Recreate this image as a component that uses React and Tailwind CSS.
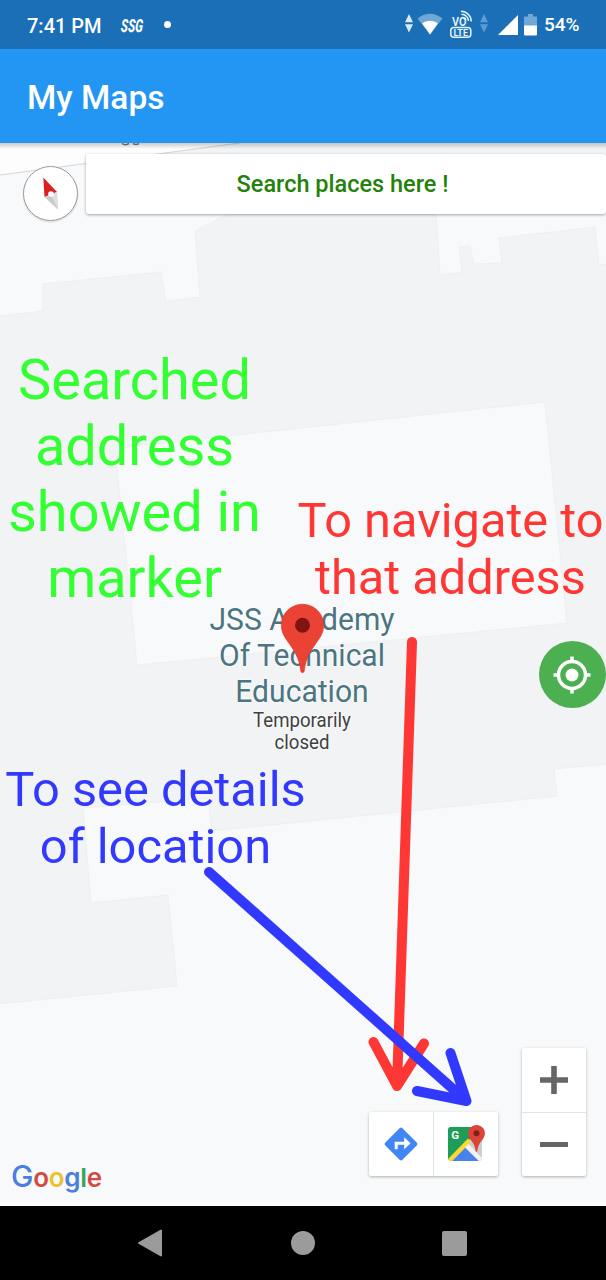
import React from "react";

function DataArrows({ className }) {
  return (
    <svg className={className} width="8" height="20" viewBox="0 0 8 20" fill="currentColor">
      <path d="M4 0 8 8.300H0zM4 18.500 0 10.200h8z" />
    </svg>
  );
}

function StatusBar() {
  return (
    <header className="flex h-[49px] shrink-0 items-center bg-[#1a6fb7] pl-[27px] pr-[27px] text-[20px] font-medium text-white">
      <span className="w-[94px] whitespace-nowrap pt-[2px]">7:41 PM</span>
      <span className="w-[43px] whitespace-nowrap font-['Roboto']">
        <span className="inline-block origin-left -skew-x-6 scale-x-[0.66] text-[18px] font-extrabold italic">SSG</span>
      </span>
      <span className="size-[7px] rounded-full bg-white" />
      <div className="ml-auto flex items-center">
        <DataArrows className="mr-[4px] -mt-[2px] text-[#dcebf7]" />
        <svg className="-mt-[2px]" width="26" height="22" viewBox="0 0 26 22">
          <path d="M0.500 5.500C8-1 18-1 25.500 5.500L13 21.500z" fill="#6fa7d7" />
          <path d="M5.200 10.500C9.500 6.800 16.500 6.800 20.800 10.500L13 21.500z" fill="#fff" />
        </svg>
        <svg className="ml-[7px] -mt-[2px]" width="24" height="30" viewBox="0 0 24 30">
          <text x="2" y="17" fontSize="13" fontWeight="600" fontFamily="Roboto" fill="#e7f2fa" textLength="14.500" lengthAdjust="spacingAndGlyphs">VO</text>
          <g fill="none" stroke="#e7f2fa" strokeWidth="1.500">
            <path d="M11 2.200A10.500 10.500 0 0 1 21.300 12.500M11.500 5.200A7.300 7.300 0 0 1 18.600 12M13 8.400A4 4 0 0 1 16 11" />
            <rect x="0.800" y="18.600" width="20" height="9.700" rx="3" />
          </g>
          <text x="3.500" y="26.700" fontSize="9" fontWeight="700" fontFamily="Roboto" fill="#e7f2fa" textLength="14.500" lengthAdjust="spacingAndGlyphs">LTE</text>
        </svg>
        <DataArrows className="ml-[6px] -mt-[2px] text-[#5d9bd0]" />
        <svg className="ml-[10px] mt-[1px]" width="20" height="20" viewBox="0 0 20 20">
          <path d="M20 0v20H0z" fill="#fff" />
        </svg>
        <svg className="ml-[6px]" width="13" height="22" viewBox="0 0 13 22">
          <path d="M4 0h5v2.500h4V12H0V2.500h4z" fill="#6fa7d7" />
          <path d="M0 11.500h13V20.500a1 1 0 0 1-1 1H1a1 1 0 0 1-1-1z" fill="#fff" />
        </svg>
        <span className="ml-[7px] w-[35px] whitespace-nowrap pt-[2px] text-[19px]">54%</span>
      </div>
    </header>
  );
}

function MapTerrain() {
  return (
    <svg className="absolute inset-0" width="606" height="1063" viewBox="0 143 606 1063">
      <rect y="143" width="606" height="1063" fill="#f1f3f4" />
      <g fill="#f8f9fb" stroke="#ebedef" strokeWidth="0.700">
        <path d="M-2 175 150 154H240L227 215 195 231 200 297 166 301 161 272 43 284V311L-2 316z" />
        <path d="M435 200 440 275 462 272 459 247 470 246 474 264 502 263 499 238 595 227 599 265 608 264V200z" />
        <path d="M115 448 545 402 567 623 137 665z" />
        <path d="M-2 1004 177 986 168 895 91 903 83 808 208 798 212 831 557 796 554 769 608 764V1204H-2z" />
      </g>
      <path d="M0 143H240L0 175z" fill="#fdfdfe" />
      <path d="M0 175 240 143" stroke="#d5d7d9" strokeWidth="1.200" />
      <path d="M122 143.500q3 2.500 7 0M133 143.500q3 1.800 6 0" stroke="#777b80" strokeWidth="1.500" fill="none" />
      <rect y="1202" width="606" height="4" fill="#fdfdfe" />
    </svg>
  );
}

function Compass() {
  return (
    <svg className="absolute left-[20px] top-[20px]" width="62" height="62" viewBox="20 163 62 62">
      <circle cx="50.500" cy="195" r="28" fill="#00000012" />
      <circle cx="50.500" cy="193.500" r="27" fill="#fff" stroke="#999" strokeWidth="1" />
      <path d="M43.300 177.500 57 192 44.500 197z" fill="#dc2020" />
      <path d="M44.500 197 57 192 57.800 209.500z" fill="#c9c9c9" />
      <path d="M51 194.500 57 192 57.800 209.500z" fill="#dedede" />
      <circle cx="51" cy="194" r="2.800" fill="#fff" />
    </svg>
  );
}

function Marker() {
  return (
    <svg className="absolute left-[280px] top-[460px]" width="46" height="72" viewBox="280 603 46 72">
      <path d="M302.500 604.200c-11.800 0-21.200 9.400-21.200 21 0 6.200 2.600 11 6.400 16.300 6.800 9.500 11.500 16.500 13 29.200.2 2.600 3.400 2.600 3.600 0 1.500-12.700 6.200-19.700 13-29.200 3.800-5.300 6.400-10.100 6.400-16.300 0-11.600-9.400-21-21.200-21z" fill="#ea4335" stroke="#d5392d" strokeWidth="0.600" />
      <circle cx="302.500" cy="625.300" r="7.500" fill="#811411" />
    </svg>
  );
}

function Arrows() {
  return (
    <svg className="pointer-events-none absolute inset-0" width="606" height="1063" viewBox="0 143 606 1063" fill="none" strokeWidth="10" strokeLinecap="round" strokeLinejoin="round">
      <path d="M412 642 397 1086M373.500 1042 397 1086 424 1043.500" stroke="#ff3734" />
      <path d="M209 872 466.500 1101M450.500 1053 466.500 1101 417 1091" stroke="#3239fe" />
    </svg>
  );
}

function DirectionsIcon() {
  return (
    <svg width="34" height="34" viewBox="0 0 34 34">
      <path d="M15.600 1.300a2 2 0 0 1 2.800 0l14.300 14.300a2 2 0 0 1 0 2.800L18.400 32.700a2 2 0 0 1-2.800 0L1.300 18.400a2 2 0 0 1 0-2.800z" fill="#4285f4" />
      <path d="M10.700 22.300V14.700h9.500V10.300l6.300 6-6.300 6v-4.500h-6.500v4.500z" fill="#fff" />
    </svg>
  );
}

function MapsIcon() {
  return (
    <svg width="40" height="40" viewBox="447 1123 40 40">
      <defs>
        <clipPath id="tile"><rect x="449" y="1127" width="34" height="34" rx="3" /></clipPath>
      </defs>
      <g clipPath="url(#tile)">
        <path d="M449 1127h34v34h-34z" fill="#cfcfcf" />
        <path d="M449 1127h34L449 1161z" fill="#1e9d58" />
        <path d="M450 1164 466.500 1147 482 1163z" fill="#4683ea" />
        <path d="M447 1161 469 1138.500 472 1142 450 1164z" fill="#fdd835" />
        <path d="M466 1147.500 469.500 1144 485 1160 482 1163z" fill="#f2f2f2" />
      </g>
      <text x="452.300" y="1139" fontSize="11.500" fontWeight="700" fontFamily="Roboto" fill="#fff">G</text>
      <path d="M477.500 1125c-4.700 0-8.400 3.600-8.400 8.300 0 6.500 6.700 8 7.500 17.500.1 1.500 1.700 1.500 1.800 0 .8-9.500 7.500-11 7.500-17.500 0-4.700-3.700-8.300-8.400-8.300z" fill="#db4437" />
      <circle cx="477.500" cy="1133.200" r="3" fill="#802018" />
    </svg>
  );
}

function MapView() {
  return (
    <main className="relative h-[1063px] shrink-0 overflow-hidden">
      <MapTerrain />
      <div className="absolute inset-x-0 top-0 h-[6px] bg-linear-to-b from-black/20 to-transparent" />
      <button className="absolute left-[86px] right-0 top-[11px] flex h-[60px] items-center justify-center rounded-[3px] bg-white pr-[7px] pt-[2px] text-[23.500px] font-medium text-[#238209] shadow-[0_1px_3px_rgba(0,0,0,0.350)]">
        Search places here !
      </button>
      <Compass />
      <div className="absolute left-[152px] top-[458.500px] w-[300px] text-center text-[31px] leading-[36px] text-[#4b7580] [text-shadow:0_0_2px_#fff,0_0_3px_#fff]">
        <p className="scale-x-[0.970]">JSS Academy<br />Of Technical<br />Education</p>
        <p className="scale-x-[0.955] text-[19.500px] leading-[22px] text-[#404040]">Temporarily<br />closed</p>
      </div>
      <Marker />
      <p className="absolute left-[-15.500px] top-[204px] w-[300px] text-center text-[55.900px] leading-[66px] text-[#33ff33]">
        Searched<br />address<br />showed in<br />marker
      </p>
      <p className="absolute left-[250.500px] top-[349px] w-[400px] text-center text-[48.700px] leading-[57px] text-[#ff3734]">
        To navigate to<br />that address
      </p>
      <p className="absolute left-[-44.500px] top-[618px] w-[400px] text-center text-[48.800px] leading-[57px] text-[#3239fe]">
        To see details<br />of location
      </p>
      <button aria-label="My location" className="absolute left-[539px] top-[498px] flex size-[67px] items-center justify-center rounded-full bg-[#4caf50]">
        <svg className="-ml-px" width="38" height="38" viewBox="0 0 38 38" fill="none" stroke="#fff" strokeWidth="3.500">
          <circle cx="19" cy="19" r="13.500" />
          <circle cx="19" cy="19" r="6.500" fill="#fff" stroke="none" />
          <path d="M19 0.500V6M19 32v5.500M0.500 19H6M32 19h5.500" />
        </svg>
      </button>
      <div className="absolute inset-x-0 bottom-[30px] flex items-end justify-end gap-[24px] pr-[20px]">
        <div className="flex h-[64px] w-[129px] divide-x divide-[#e3e4e5] rounded-[2px] bg-white shadow-[0_1px_3px_rgba(0,0,0,0.300)]">
          <button aria-label="Directions" className="flex flex-1 items-center justify-center"><DirectionsIcon /></button>
          <button aria-label="Open in maps" className="flex flex-1 items-center justify-center pb-[2px] pl-px"><MapsIcon /></button>
        </div>
        <div className="flex h-[128px] w-[64px] flex-col divide-y divide-[#e3e4e5] rounded-[2px] bg-white shadow-[0_1px_3px_rgba(0,0,0,0.300)]">
          <button aria-label="Zoom in" className="flex flex-1 items-center justify-center">
            <svg width="28" height="28" viewBox="0 0 28 28" fill="#666"><path d="M11.200 0h5.600v11.200H28v5.600H16.800V28h-5.600V16.800H0v-5.600h11.200z" /></svg>
          </button>
          <button aria-label="Zoom out" className="flex flex-1 items-center justify-center">
            <span className="h-[5px] w-[28px] bg-[#666]" />
          </button>
        </div>
      </div>
      <div className="absolute left-[11px] top-[1018px] flex items-baseline font-['Inter'] text-[26px] font-semibold leading-[30px] tracking-[-0.300px]">
        <span className="text-[30px] font-medium text-[#4a80dc]">G</span>
        <span className="text-[#d14a45]">o</span>
        <span className="text-[#e8c42c]">o</span>
        <span className="text-[#4a80dc]">g</span>
        <span className="text-[#3ca45c]">l</span>
        <span className="text-[#d14a45]">e</span>
      </div>
      <Arrows />
    </main>
  );
}

function NavigationBar() {
  return (
    <nav className="flex h-[74px] shrink-0 items-center bg-black pl-[137px] text-[#9b9b9b]">
      <svg width="26" height="28" viewBox="0 0 26 28" fill="currentColor" stroke="currentColor" strokeWidth="2" strokeLinejoin="round"><path d="M2 14 24 1.500v25z" /></svg>
      <span className="ml-[128px] size-[24px] rounded-full bg-current" />
      <span className="ml-[127px] size-[25px] rounded-[2px] bg-current" />
    </nav>
  );
}

export default function App() {
  return (
    <div className="flex h-[1280px] w-[606px] flex-col overflow-hidden font-['Roboto',sans-serif]">
      <StatusBar />
      <div className="flex h-[94px] shrink-0 items-center bg-[#2396f3] pl-[27px] pt-[4px] text-[33.500px] font-medium text-white">
        <h1>My Maps</h1>
      </div>
      <MapView />
      <NavigationBar />
    </div>
  );
}
